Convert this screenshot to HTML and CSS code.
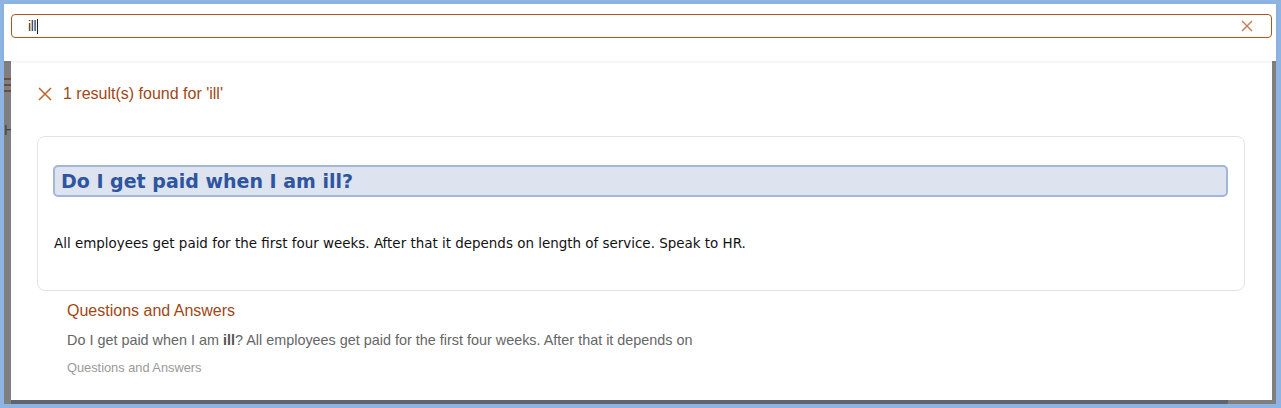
FILE: index.html
```html
<!DOCTYPE html>
<html>
<head>
<meta charset="utf-8">
<link rel="stylesheet" href="styles.css">
</head>
<body>
<div class="frame">
  <div class="window">
    <header class="search-bar">
      <div class="search-input">
        <span class="query">ill</span><span class="caret"></span>
        <svg class="clear" width="12" height="12" viewBox="0 0 12 12"><path d="M1 1L11 11M11 1L1 11" stroke="#c77a50" stroke-width="1.4" fill="none"/></svg>
      </div>
    </header>
    <div class="middle">
      <div class="backdrop-left">
        <div class="burger"><span></span><span></span><span></span></div>
        <div class="ghost-h">H</div>
      </div>
      <main class="panel">
        <div class="result-count">
          <svg class="close" width="14" height="14" viewBox="0 0 14 14"><path d="M1 1L13 13M13 1L1 13" stroke="#c0622c" stroke-width="1.5" fill="none"/></svg>
          <span>1 result(s) found for 'ill'</span>
        </div>
        <section class="card">
          <h2 class="question">Do I get paid when I am ill?</h2>
          <p class="answer">All employees get paid for the first four weeks. After that it depends on length of service. Speak to HR.</p>
        </section>
        <div class="hit">
          <div class="hit-title">Questions and Answers</div>
          <div class="hit-snippet">Do I get paid when I am <b>ill</b>? All employees get paid for the first four weeks. After that it depends on</div>
          <div class="hit-source">Questions and Answers</div>
        </div>
      </main>
      <div class="backdrop-right"></div>
    </div>
    <div class="bottom-strip"><div class="bottom-dark"></div></div>
  </div>
</div>
</body>
</html>
```

FILE: styles.css
```css
* { box-sizing: border-box; }
html, body { margin: 0; padding: 0; }
body {
  width: 1281px;
  height: 408px;
  overflow: hidden;
  font-family: "Liberation Sans", Arial, sans-serif;
  background: #8db4e2;
}
.frame {
  padding: 4px 5px 4px 4px;
  height: 408px;
}
.window {
  height: 400px;
  background: #7f7f7f;
  display: flex;
  flex-direction: column;
}
.search-bar {
  height: 57px;
  background: #fff;
  padding: 10px 4px 0 7px;
  box-shadow: 0 1px 3px rgba(0,0,0,0.08);
  position: relative;
  z-index: 2;
}
.search-input {
  height: 24px;
  border: 1px solid #a9581f;
  border-radius: 4px;
  display: flex;
  align-items: center;
  padding: 0 18px 0 16px;
  font-size: 14px;
  color: #333;
}
.query { letter-spacing: -0.3px; }
.caret {
  display: inline-block;
  width: 1px;
  height: 15px;
  background: #222;
  margin-left: 1px;
}
.clear { margin-left: auto; }
.middle {
  display: flex;
  height: 339px;
}
.backdrop-left {
  width: 7px;
  overflow: hidden;
  padding-top: 17px;
}
.burger {
  display: flex;
  flex-direction: column;
  gap: 4px;
  width: 14px;
  margin-left: -4px;
}
.burger span {
  height: 2px;
  background: #6e4d3c;
}
.ghost-h {
  margin-top: 30px;
  font-size: 14px;
  color: #3c434c;
  line-height: 16px;
}
.panel {
  width: 1261px;
  background: #fff;
  padding: 24px 27px 0 26px;
}
.backdrop-right { flex: 1; }
.result-count {
  display: flex;
  align-items: center;
  gap: 11px;
  padding-left: 1px;
  color: #9f4715;
  font-size: 16px;
  height: 18px;
}
.card {
  margin-top: 33px;
  border: 1px solid #e3e3e3;
  border-radius: 8px;
  padding: 28px 16px 0 15px;
  height: 155px;
}
.question {
  margin: 0;
  height: 32px;
  background: #dde3ef;
  border: 2px solid #a2b6da;
  border-radius: 5px;
  padding: 0 6px;
  font-family: "DejaVu Sans", Verdana, sans-serif;
  font-weight: bold;
  font-size: 19px;
  line-height: 28px;
  color: #2d55a0;
}
.answer {
  margin: 38px 0 0 1px;
  font-family: "DejaVu Sans", Verdana, sans-serif;
  font-size: 13.45px;
  line-height: 17px;
  color: #111;
}
.hit {
  padding: 10px 0 0 30px;
}
.hit-title {
  color: #9f4715;
  font-size: 16px;
  line-height: 20px;
}
.hit-snippet {
  margin-top: 10px;
  color: #666;
  font-size: 14.4px;
  line-height: 19px;
}
.hit-snippet b { color: #555; }
.hit-source {
  margin-top: 10px;
  color: #999;
  font-size: 12.8px;
  line-height: 15px;
}
.bottom-strip {
  height: 4px;
  padding-left: 7px;
}
.bottom-dark {
  width: 1217px;
  height: 4px;
  background: #5b646f;
  border-bottom-right-radius: 2px;
}
```
